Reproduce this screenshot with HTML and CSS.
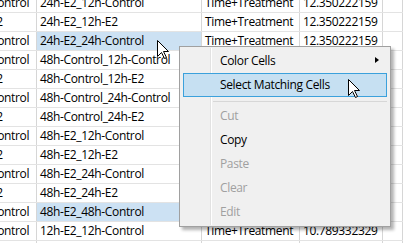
FILE: index.html
```html
<!DOCTYPE html>
<html lang="en">
<head>
  <meta charset="UTF-8" />
  <title>Grid context menu</title>
  <link rel="stylesheet" href="styles.css">
</head>
<body>
  <div class="grid">
    <div class="row"><div class="cell c1">Control</div><div class="cell c2">24h-E2_12h-Control</div><div class="cell c3">Time+Treatment</div><div class="cell c4">12.350222159</div><div class="cell c5"></div></div>
    <div class="row"><div class="cell c1">E2</div><div class="cell c2">24h-E2_12h-E2</div><div class="cell c3">Time+Treatment</div><div class="cell c4">12.350222159</div><div class="cell c5"></div></div>
    <div class="row"><div class="cell c1">Control</div><div class="cell c2 selected">24h-E2_24h-Control</div><div class="cell c3">Time+Treatment</div><div class="cell c4">12.350222159</div><div class="cell c5"></div></div>
    <div class="row"><div class="cell c1">Control</div><div class="cell c2">48h-Control_12h-Control</div><div class="cell c3">Time+Treatment</div><div class="cell c4">12.350222159</div><div class="cell c5"></div></div>
    <div class="row"><div class="cell c1">E2</div><div class="cell c2">48h-Control_12h-E2</div><div class="cell c3">Time+Treatment</div><div class="cell c4">12.350222159</div><div class="cell c5"></div></div>
    <div class="row"><div class="cell c1">Control</div><div class="cell c2">48h-Control_24h-Control</div><div class="cell c3">Time+Treatment</div><div class="cell c4">12.350222159</div><div class="cell c5"></div></div>
    <div class="row"><div class="cell c1">E2</div><div class="cell c2">48h-Control_24h-E2</div><div class="cell c3">Time+Treatment</div><div class="cell c4">12.350222159</div><div class="cell c5"></div></div>
    <div class="row"><div class="cell c1">Control</div><div class="cell c2">48h-E2_12h-Control</div><div class="cell c3">Time+Treatment</div><div class="cell c4">12.350222159</div><div class="cell c5"></div></div>
    <div class="row"><div class="cell c1">E2</div><div class="cell c2">48h-E2_12h-E2</div><div class="cell c3">Time+Treatment</div><div class="cell c4">12.350222159</div><div class="cell c5"></div></div>
    <div class="row"><div class="cell c1">Control</div><div class="cell c2">48h-E2_24h-Control</div><div class="cell c3">Time+Treatment</div><div class="cell c4">12.350222159</div><div class="cell c5"></div></div>
    <div class="row"><div class="cell c1">E2</div><div class="cell c2">48h-E2_24h-E2</div><div class="cell c3">Time+Treatment</div><div class="cell c4">12.350222159</div><div class="cell c5"></div></div>
    <div class="row"><div class="cell c1">Control</div><div class="cell c2 selected">48h-E2_48h-Control</div><div class="cell c3">Time+Treatment</div><div class="cell c4">12.350222159</div><div class="cell c5"></div></div>
    <div class="row"><div class="cell c1">Control</div><div class="cell c2">12h-E2_12h-Control</div><div class="cell c3">Time+Treatment</div><div class="cell c4">10.789332329</div><div class="cell c5"></div></div>
    <div class="row"><div class="cell c1">E2</div><div class="cell c2">12h-E2_12h-E2</div><div class="cell c3">Time+Treatment</div><div class="cell c4">10.789332329</div><div class="cell c5"></div></div>
  </div>

  <div class="menu">
    <div class="item">Color Cells<span class="sub"></span></div>
    <div class="item active">Select Matching Cells</div>
    <div class="sep"></div>
    <div class="item disabled">Cut</div>
    <div class="item">Copy</div>
    <div class="item disabled">Paste</div>
    <div class="item disabled">Clear</div>
    <div class="item disabled">Edit</div>
  </div>

  <svg class="cursor cursor-a" width="13" height="20" viewBox="0 0 13 20">
    <path d="M0.5,0.5 L0.5,16.5 L4.5,12.5 L7.5,18.5 L9.5,17.5 L6.5,11.5 L11.5,11.5 Z" fill="#fff" stroke="#000" stroke-width="1" stroke-linejoin="miter"/>
  </svg>
  <svg class="cursor cursor-b" width="13" height="20" viewBox="0 0 13 20">
    <path d="M0.5,0.5 L0.5,16.5 L4.5,12.5 L7.5,18.5 L9.5,17.5 L6.5,11.5 L11.5,11.5 Z" fill="#fff" stroke="#000" stroke-width="1" stroke-linejoin="miter"/>
  </svg>
</body>
</html>
```

FILE: styles.css
```css
html, body {
  margin: 0;
  padding: 0;
  overflow: hidden;
  background: #fff;
}

body {
  font-family: 'Open Sans', 'Noto Sans', sans-serif;
  font-size: 12px;
  letter-spacing: -0.35px;
  color: #000;
  position: relative;
  width: 403px;
  height: 243px;
}

.grid {
  margin-top: -6px;
  margin-left: -13px;
  width: 416px;
}

.row {
  display: flex;
  height: 19px;
  box-sizing: border-box;
  border-bottom: 1px solid #e3e3e3;
}

.cell {
  box-sizing: border-box;
  border-right: 1px solid #d6d6d6;
  padding: 0 3px;
  line-height: 18px;
  white-space: nowrap;
  overflow: hidden;
}

.c1 { width: 50px; }
.c2 { width: 165px; }
.c3 { width: 98px; }
.c4 { width: 83px; }
.c5 { flex: 1; }

.selected {
  background: #cce1f3;
}

.menu {
  position: absolute;
  left: 179px;
  top: 46px;
  width: 212px;
  height: 181px;
  box-sizing: border-box;
  padding: 2px;
  background: #f0f0f0;
  border: 1px solid #a0a0a0;
  box-shadow: 3px 3px 3px rgba(0, 0, 0, 0.3);
}

.menu::before {
  content: "";
  position: absolute;
  left: 30px;
  top: 1px;
  bottom: 1px;
  width: 1px;
  background: #e2e2e2;
  border-right: 1px solid #fff;
}

.item {
  position: relative;
  height: 24px;
  line-height: 22px;
  margin: 0 1px;
  padding-left: 36px;
  box-sizing: border-box;
  border: 1px solid transparent;
}

.item.active {
  background: #c6e0f2;
  border-color: #3ba1dc;
}

.item.disabled {
  color: #a0a0a0;
}

.sub {
  position: absolute;
  right: 7px;
  top: 7px;
  width: 0;
  height: 0;
  border-top: 3.5px solid transparent;
  border-bottom: 3.5px solid transparent;
  border-left: 4px solid #000;
}

.sep {
  height: 1px;
  margin: 4px 1px 2px 31px;
  background: #d7d7d7;
}

.cursor {
  position: absolute;
}

.cursor-a {
  left: 157px;
  top: 40px;
}

.cursor-b {
  left: 348px;
  top: 79px;
}
```
